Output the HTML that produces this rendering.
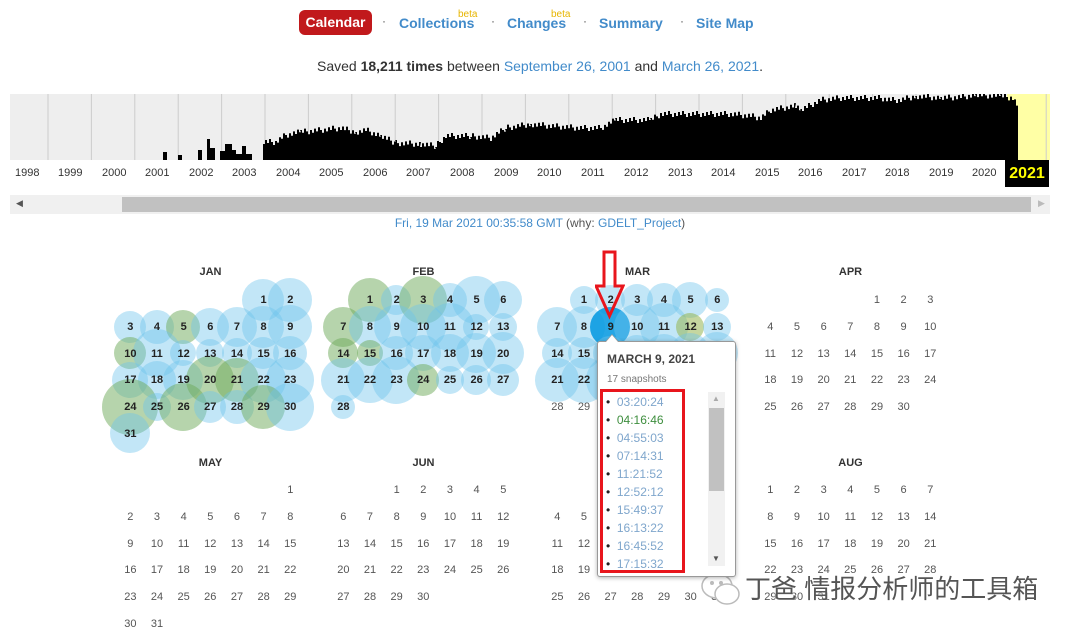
<!DOCTYPE html>
<html><head><meta charset="utf-8"><style>
body{margin:0;width:1080px;height:635px;background:#fff;font-family:"Liberation Sans",Arial,sans-serif;position:relative;overflow:hidden}
.a{position:absolute}
.cal{left:299px;top:10px;width:73px;height:25px;background:#c1191c;border-radius:6px;color:#fff;font-weight:bold;font-size:14px;text-align:center;line-height:25px}
.lk{color:#428bca;font-weight:bold;font-size:14px;top:15px}
.dot{color:#555;font-size:12px;top:14px}
.beta{color:#e7b500;font-size:10px;top:9px}
.blue{color:#428bca}
table{position:absolute;border-collapse:collapse;z-index:2}
td{width:26.67px;height:26.67px;padding:0;text-align:center;font-size:11px;color:#555}
td.b{font-weight:bold;color:#222}
.mh{font-size:11px;font-weight:bold;color:#333;width:187px;text-align:center;z-index:2}
.c{position:absolute;border-radius:50%;z-index:1}
.yr{top:167px;font-size:11px;color:#333}
.li span.k{color:#222}
</style></head><body>
<div class="a cal">Calendar</div>
<div class="a dot" style="left:382px">·</div>
<div class="a lk" style="left:399px">Collections</div><div class="a beta" style="left:458px">beta</div>
<div class="a dot" style="left:491px">·</div>
<div class="a lk" style="left:507px">Changes</div><div class="a beta" style="left:551px">beta</div>
<div class="a dot" style="left:583px">·</div>
<div class="a lk" style="left:599px">Summary</div>
<div class="a dot" style="left:680px">·</div>
<div class="a lk" style="left:696px">Site Map</div>
<div class="a" style="top:58px;left:0;width:1080px;text-align:center;font-size:14px;color:#333">Saved <b>18,211 times</b> between <span class="blue">September 26, 2001</span> and <span class="blue">March 26, 2021</span>.</div>
<div class="a" style="left:10px;top:94px;width:1040px;height:66px;background:#eee"></div>
<div class="a" style="left:1007px;top:94px;width:43px;height:66px;background:#ffffa5"></div>
<svg class="a" id="hist" style="left:0;top:94px" width="1080" height="66"></svg>
<div class="a" style="left:1005px;top:160px;width:44px;height:27px;background:#000;color:#ff0;font-weight:bold;font-size:16px;text-align:center;line-height:27px">2021</div>
<div class="a yr" style="left:15px">1998</div><div class="a yr" style="left:58px">1999</div><div class="a yr" style="left:102px">2000</div><div class="a yr" style="left:145px">2001</div><div class="a yr" style="left:189px">2002</div><div class="a yr" style="left:232px">2003</div><div class="a yr" style="left:276px">2004</div><div class="a yr" style="left:319px">2005</div><div class="a yr" style="left:363px">2006</div><div class="a yr" style="left:406px">2007</div><div class="a yr" style="left:450px">2008</div><div class="a yr" style="left:494px">2009</div><div class="a yr" style="left:537px">2010</div><div class="a yr" style="left:581px">2011</div><div class="a yr" style="left:624px">2012</div><div class="a yr" style="left:668px">2013</div><div class="a yr" style="left:711px">2014</div><div class="a yr" style="left:755px">2015</div><div class="a yr" style="left:798px">2016</div><div class="a yr" style="left:842px">2017</div><div class="a yr" style="left:885px">2018</div><div class="a yr" style="left:929px">2019</div><div class="a yr" style="left:972px">2020</div>
<div class="a" style="left:10px;top:195px;width:1040px;height:19px;background:#f0f0f0"></div>
<div class="a" style="left:122px;top:197px;width:909px;height:15px;background:#c1c1c1"></div>
<div class="a" style="left:16px;top:198px;font-size:9px;color:#555">◀</div>
<div class="a" style="left:1038px;top:198px;font-size:9px;color:#bbb">▶</div>
<div class="a" style="top:216px;left:0;width:1080px;text-align:center;font-size:12px;color:#555"><span class="blue">Fri, 19 Mar 2021 00:35:58 GMT</span> (why: <span class="blue">GDELT_Project</span>)</div>

<div id="circ"></div>
<div class="a mh" style="left:117px;top:266px">JAN</div>
<div class="a mh" style="left:330px;top:266px">FEB</div>
<div class="a mh" style="left:544px;top:266px">MAR</div>
<div class="a mh" style="left:757px;top:266px">APR</div>
<div class="a mh" style="left:117px;top:457px">MAY</div>
<div class="a mh" style="left:330px;top:457px">JUN</div>
<div class="a mh" style="left:757px;top:457px">AUG</div>
<table style="left:117px;top:287px"><tr><td></td><td></td><td></td><td></td><td></td><td class="b">1</td><td class="b">2</td></tr><tr><td class="b">3</td><td class="b">4</td><td class="b">5</td><td class="b">6</td><td class="b">7</td><td class="b">8</td><td class="b">9</td></tr><tr><td class="b">10</td><td class="b">11</td><td class="b">12</td><td class="b">13</td><td class="b">14</td><td class="b">15</td><td class="b">16</td></tr><tr><td class="b">17</td><td class="b">18</td><td class="b">19</td><td class="b">20</td><td class="b">21</td><td class="b">22</td><td class="b">23</td></tr><tr><td class="b">24</td><td class="b">25</td><td class="b">26</td><td class="b">27</td><td class="b">28</td><td class="b">29</td><td class="b">30</td></tr><tr><td class="b">31</td><td></td><td></td><td></td><td></td><td></td><td></td></tr></table>
<table style="left:330px;top:287px"><tr><td></td><td class="b">1</td><td class="b">2</td><td class="b">3</td><td class="b">4</td><td class="b">5</td><td class="b">6</td></tr><tr><td class="b">7</td><td class="b">8</td><td class="b">9</td><td class="b">10</td><td class="b">11</td><td class="b">12</td><td class="b">13</td></tr><tr><td class="b">14</td><td class="b">15</td><td class="b">16</td><td class="b">17</td><td class="b">18</td><td class="b">19</td><td class="b">20</td></tr><tr><td class="b">21</td><td class="b">22</td><td class="b">23</td><td class="b">24</td><td class="b">25</td><td class="b">26</td><td class="b">27</td></tr><tr><td class="b">28</td><td></td><td></td><td></td><td></td><td></td><td></td></tr></table>
<table style="left:544px;top:287px"><tr><td></td><td class="b">1</td><td class="b">2</td><td class="b">3</td><td class="b">4</td><td class="b">5</td><td class="b">6</td></tr><tr><td class="b">7</td><td class="b">8</td><td class="b">9</td><td class="b">10</td><td class="b">11</td><td class="b">12</td><td class="b">13</td></tr><tr><td class="b">14</td><td class="b">15</td><td class="b">16</td><td class="b">17</td><td class="b">18</td><td class="b">19</td><td class="b">20</td></tr><tr><td class="b">21</td><td class="b">22</td><td class="b">23</td><td class="b">24</td><td class="b">25</td><td class="b">26</td><td class="b">27</td></tr><tr><td>28</td><td>29</td><td>30</td><td>31</td><td></td><td></td><td></td></tr></table>
<table style="left:757px;top:287px"><tr><td></td><td></td><td></td><td></td><td>1</td><td>2</td><td>3</td></tr><tr><td>4</td><td>5</td><td>6</td><td>7</td><td>8</td><td>9</td><td>10</td></tr><tr><td>11</td><td>12</td><td>13</td><td>14</td><td>15</td><td>16</td><td>17</td></tr><tr><td>18</td><td>19</td><td>20</td><td>21</td><td>22</td><td>23</td><td>24</td></tr><tr><td>25</td><td>26</td><td>27</td><td>28</td><td>29</td><td>30</td><td></td></tr></table>
<table style="left:117px;top:477px"><tr><td></td><td></td><td></td><td></td><td></td><td></td><td>1</td></tr><tr><td>2</td><td>3</td><td>4</td><td>5</td><td>6</td><td>7</td><td>8</td></tr><tr><td>9</td><td>10</td><td>11</td><td>12</td><td>13</td><td>14</td><td>15</td></tr><tr><td>16</td><td>17</td><td>18</td><td>19</td><td>20</td><td>21</td><td>22</td></tr><tr><td>23</td><td>24</td><td>25</td><td>26</td><td>27</td><td>28</td><td>29</td></tr><tr><td>30</td><td>31</td><td></td><td></td><td></td><td></td><td></td></tr></table>
<table style="left:330px;top:477px"><tr><td></td><td></td><td>1</td><td>2</td><td>3</td><td>4</td><td>5</td></tr><tr><td>6</td><td>7</td><td>8</td><td>9</td><td>10</td><td>11</td><td>12</td></tr><tr><td>13</td><td>14</td><td>15</td><td>16</td><td>17</td><td>18</td><td>19</td></tr><tr><td>20</td><td>21</td><td>22</td><td>23</td><td>24</td><td>25</td><td>26</td></tr><tr><td>27</td><td>28</td><td>29</td><td>30</td><td></td><td></td><td></td></tr></table>
<table style="left:544px;top:477px"><tr><td></td><td></td><td></td><td></td><td>1</td><td>2</td><td>3</td></tr><tr><td>4</td><td>5</td><td>6</td><td>7</td><td>8</td><td>9</td><td>10</td></tr><tr><td>11</td><td>12</td><td>13</td><td>14</td><td>15</td><td>16</td><td>17</td></tr><tr><td>18</td><td>19</td><td>20</td><td>21</td><td>22</td><td>23</td><td>24</td></tr><tr><td>25</td><td>26</td><td>27</td><td>28</td><td>29</td><td>30</td><td>31</td></tr></table>
<table style="left:757px;top:477px"><tr><td>1</td><td>2</td><td>3</td><td>4</td><td>5</td><td>6</td><td>7</td></tr><tr><td>8</td><td>9</td><td>10</td><td>11</td><td>12</td><td>13</td><td>14</td></tr><tr><td>15</td><td>16</td><td>17</td><td>18</td><td>19</td><td>20</td><td>21</td></tr><tr><td>22</td><td>23</td><td>24</td><td>25</td><td>26</td><td>27</td><td>28</td></tr><tr><td>29</td><td>30</td><td>31</td><td></td><td></td><td></td><td></td></tr></table>

<div class="a" style="left:597px;top:341px;width:137px;height:234px;background:#fff;border:1px solid #999;border-radius:3px;box-shadow:0 1px 4px rgba(0,0,0,.3);z-index:5">
<div class="a" style="left:9px;top:10px;font-size:12px;font-weight:bold;color:#444">MARCH 9, 2021</div>
<div class="a" style="left:9px;top:32px;font-size:10px;color:#777">17 snapshots</div>
<div class="a" style="left:2px;top:47px;width:85px;height:184px;border:3px solid #e8151c;box-sizing:border-box"></div>
<div class="a li" style="left:8px;top:51px;font-size:12px;line-height:18px;color:#7fa6cc">
<div><span class="k">•</span>&nbsp;&nbsp;03:20:24</div><div><span class="k">•</span>&nbsp;&nbsp;<span style="color:#3e8e3e">04:16:46</span></div><div><span class="k">•</span>&nbsp;&nbsp;04:55:03</div><div><span class="k">•</span>&nbsp;&nbsp;07:14:31</div><div><span class="k">•</span>&nbsp;&nbsp;11:21:52</div><div><span class="k">•</span>&nbsp;&nbsp;12:52:12</div><div><span class="k">•</span>&nbsp;&nbsp;15:49:37</div><div><span class="k">•</span>&nbsp;&nbsp;16:13:22</div><div><span class="k">•</span>&nbsp;&nbsp;16:45:52</div><div><span class="k">•</span>&nbsp;&nbsp;17:15:32</div></div>
<div class="a" style="left:110px;top:50px;width:17px;height:174px;background:#f1f1f1"></div>
<div class="a" style="left:111px;top:66px;width:15px;height:83px;background:#c1c1c1"></div>
<div class="a" style="left:114px;top:52px;font-size:8px;color:#aaa">▲</div>
<div class="a" style="left:114px;top:212px;font-size:8px;color:#555">▼</div>
</div>
<div class="a" style="left:605px;top:334px;width:0;height:0;border-left:7px solid transparent;border-right:7px solid transparent;border-bottom:8px solid #999;z-index:6"></div>
<div class="a" style="left:606px;top:335px;width:0;height:0;border-left:6px solid transparent;border-right:6px solid transparent;border-bottom:7px solid #fff;z-index:6"></div>
<svg class="a" style="left:595px;top:250px;z-index:7" width="30" height="70"><path d="M9 2 H20 V36 H28 L14.5 66 L1 36 H9 Z" fill="none" stroke="#e8151c" stroke-width="3"/></svg>
<svg class="a" style="left:700px;top:570px;z-index:3" width="42" height="36"><ellipse cx="17" cy="16" rx="15" ry="12" fill="#fff" stroke="#bbb" stroke-width="1.5"/><ellipse cx="27" cy="24" rx="12" ry="10" fill="#fff" stroke="#bbb" stroke-width="1.5"/><circle cx="12" cy="13" r="2" fill="#bbb"/><circle cx="21" cy="13" r="2" fill="#bbb"/></svg>
<div class="a" style="left:745px;top:569px;font-size:26px;color:#555;font-family:'Liberation Sans','Noto Sans CJK SC',sans-serif;z-index:3;text-shadow:0 0 2px #fff">丁爸 情报分析师的工具箱</div>
<script>
var s=document.getElementById('hist'),h='';
for(var x=10;x<1050;x+=43.4){h+='<line x1="'+(x+38)+'" y1="0" x2="'+(x+38)+'" y2="66" stroke="#ccc"/>';}
var pts=[[263,18],[275,18],[285,25],[300,28],[320,30],[340,32],[355,28],[365,30],[380,24],[395,17],[420,16],[435,14],[445,24],[470,24],[490,22],[505,32],[530,36],[550,34],[580,32],[600,32],[615,40],[650,40],[660,46],[690,46],[710,46],[730,46],[750,44],[760,42],[770,50],[795,54],[800,50],[820,60],[840,62],[860,62],[880,62],[890,60],[900,60],[915,64],[940,62],[960,63],[975,65],[1000,64],[1012,62],[1018,52]];
var p='M163 66 L163 58 L167 58 L167 66 L178 66 L178 61 L182 61 L182 66 L198 66 L198 56 L202 56 L202 66 L207 66 L207 45 L210 45 L210 54 L215 54 L215 66 L220 66 L220 57 L225 57 L225 50 L232 50 L232 56 L236 56 L236 60 L242 60 L242 52 L246 52 L246 60 L252 60 L252 66 L263 66 ';
for(var i=0;i<pts.length-1;i++){var a=pts[i],b=pts[i+1];for(var x=a[0];x<b[0];x+=2){var y=a[1]+(b[1]-a[1])*(x-a[0])/(b[0]-a[0]);y+=((x*7919)%7)-3;y=Math.max(0,Math.min(66,y));p+='L'+x+' '+(66-y)+' L'+(x+2)+' '+(66-y)+' ';}}
p+='L1018 66 Z';h+='<path d="'+p+'" fill="#000"/>';s.innerHTML=h;
var c='',B='rgba(110,195,235,0.42)',G='rgba(110,170,90,0.5)';
function m(x0,y0,start,days,spec){for(var d=1;d<=days;d++){var k=start+d-1,cx=x0+(k%7)*26.67,cy=y0+Math.floor(k/7)*26.67;var sp=spec[d]||{};var rr=sp.r||(13+((d*37)%12));var col=sp.c||B;c+='<div class="c" style="left:'+(cx-rr)+'px;top:'+(cy-rr)+'px;width:'+2*rr+'px;height:'+2*rr+'px;background:'+col+'"></div>';}}
m(130,300,5,31,{5:{c:G,r:17},10:{c:G,r:16},20:{c:G,r:24},21:{c:G,r:22},24:{c:G,r:28},26:{c:G,r:24},29:{c:G,r:22},31:{r:20},30:{r:24},1:{r:21},2:{r:22}});
m(343,300,1,28,{1:{c:G,r:22},3:{c:G,r:24},7:{c:G,r:20},14:{c:G,r:15},15:{c:G,r:13},24:{c:G,r:16},28:{r:12},5:{r:24}});
m(557,300,1,27,{9:{c:'rgba(0,150,225,0.85)',r:20},12:{c:'rgba(150,180,80,0.55)',r:14},6:{r:12}});
document.getElementById('circ').innerHTML=c;
</script>
</body></html>
